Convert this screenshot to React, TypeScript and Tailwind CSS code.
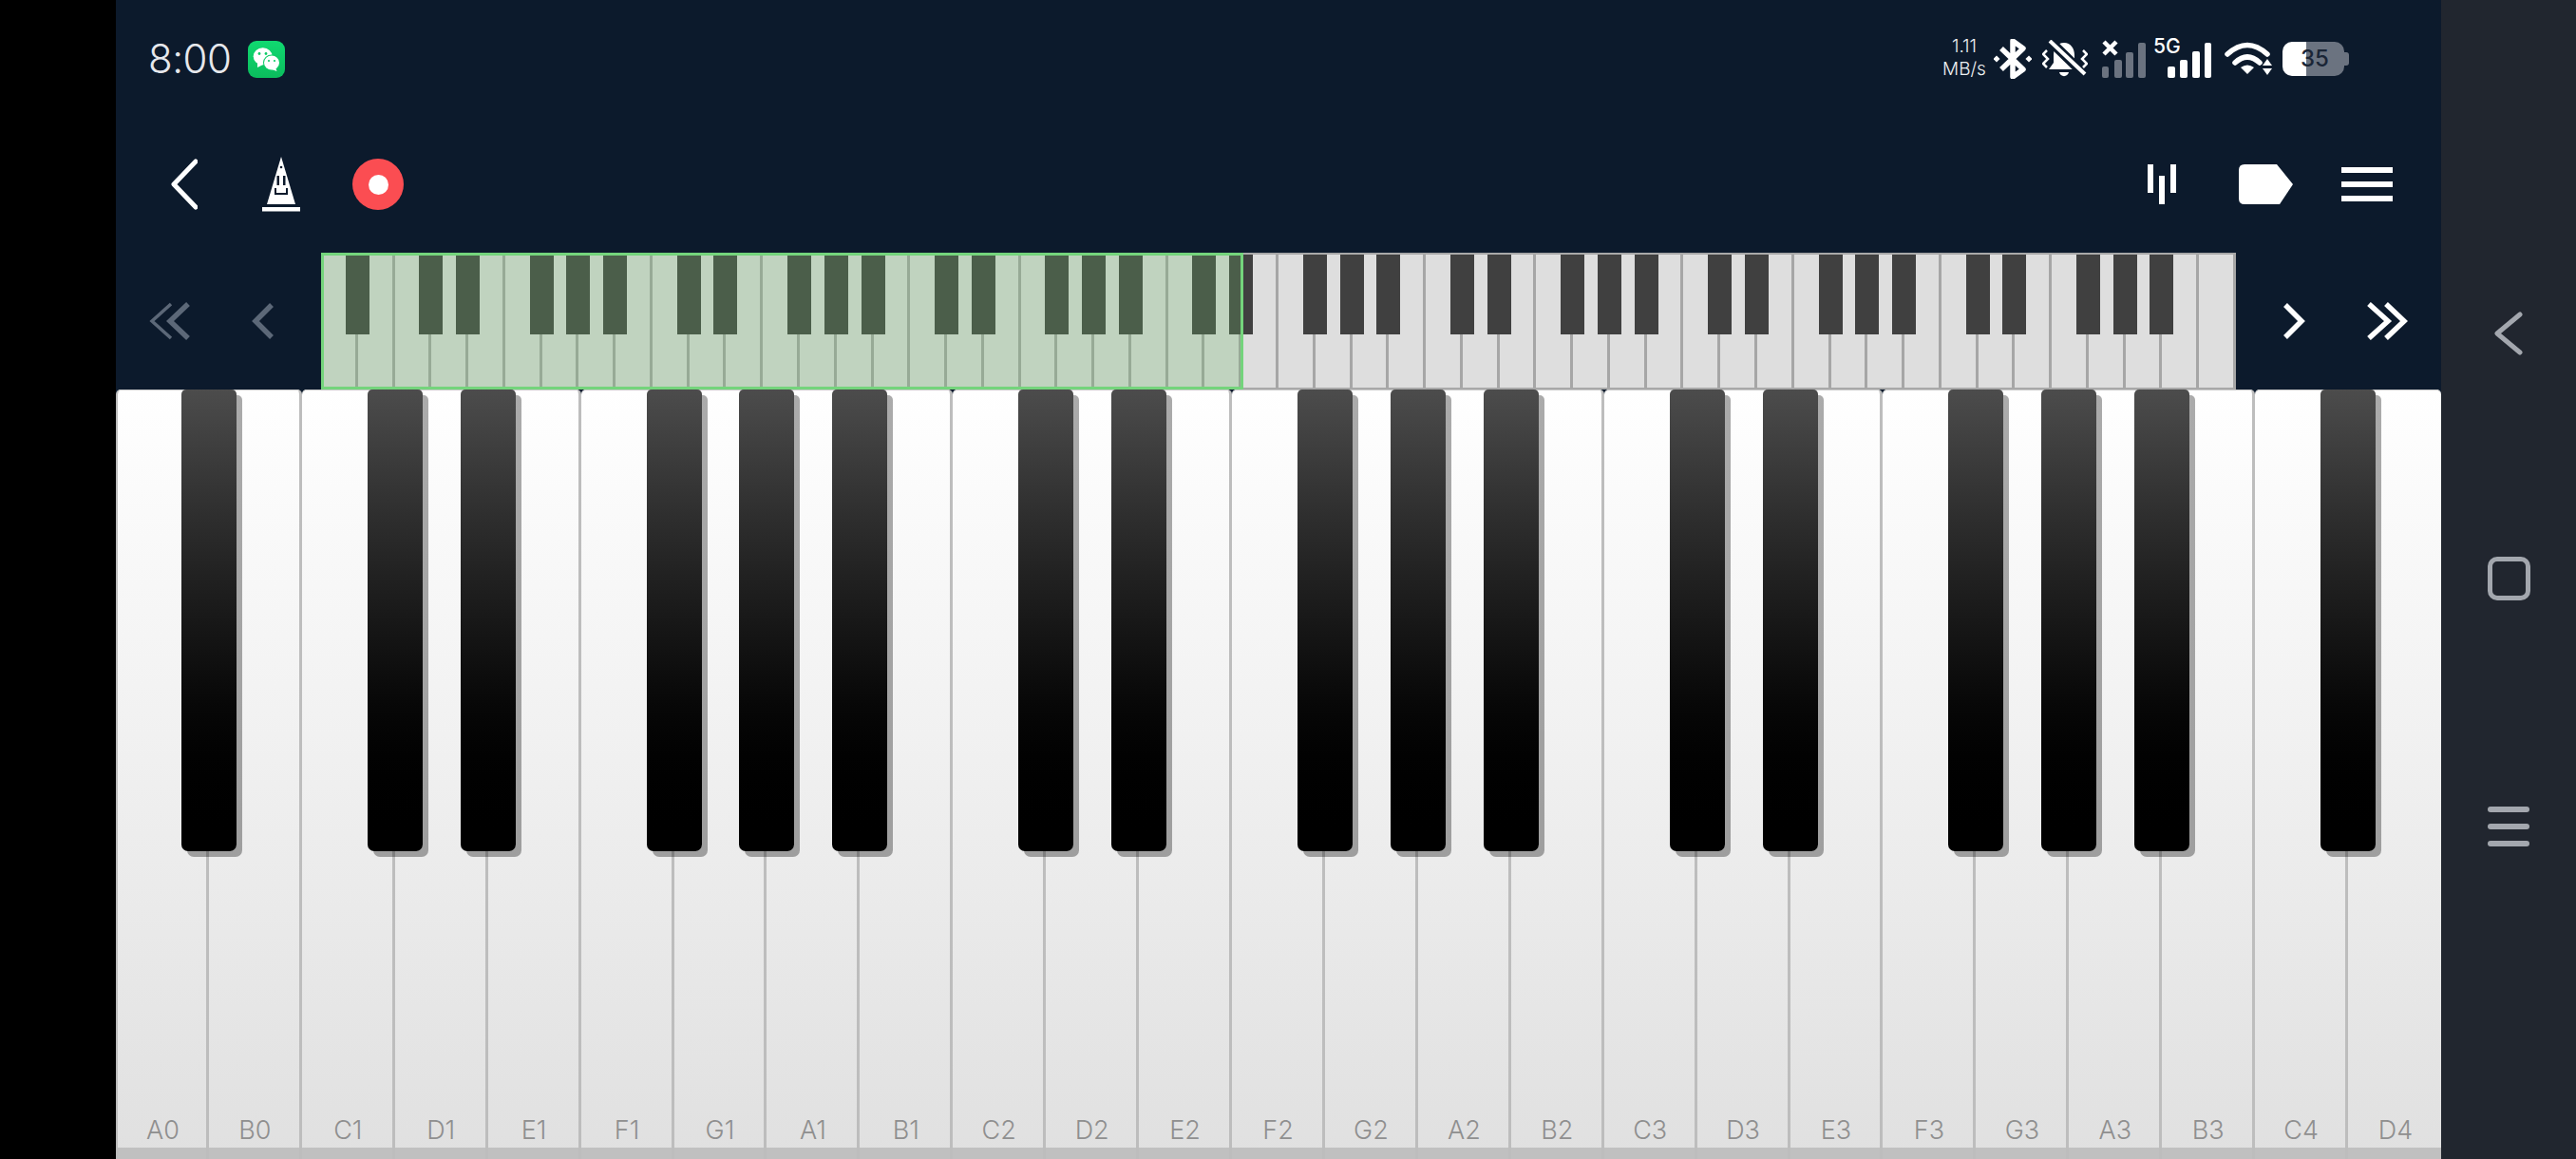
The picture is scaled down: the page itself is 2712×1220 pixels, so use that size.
import React from 'react';

const WHITE_LABELS = ['A0','B0','C1','D1','E1','F1','G1','A1','B1','C2','D2','E2','F2','G2','A2','B2','C3','D3','E3','F3','G3','A3','B3','C4','D4'];
const MINI_KEYS = Array.from({ length: 52 }, (_, i) => i);

// black key sits on the boundary after white key i (i is 0-based)
const hasBlack = (i: number, total: number) => i < total - 1 && [3, 4, 6, 0, 1].includes((i + 1) % 7);

const BG = '#0c1a2c';

function Chevron({ dir, color, double }: { dir: 'left' | 'right'; color: string; double?: boolean }) {
  const pts = dir === 'left' ? '22,3 5,20 22,37' : '3,3 20,20 3,37';
  if (double) {
    const first = dir === 'left' ? '24,2 4,20 24,38' : '3,2 23,20 3,38';
    const second = dir === 'left' ? '42,2 23,20 42,38' : '21,2 40,20 21,38';
    return (
      <svg width="44" height="40" viewBox="0 0 44 40" fill="none" stroke={color}>
        <polyline points={first} strokeWidth={dir === 'left' ? 3.5 : 5.5} />
        <polyline points={second} strokeWidth="5.5" />
      </svg>
    );
  }
  return (
    <svg width="24" height="40" viewBox="0 0 24 40" fill="none" stroke={color} strokeWidth="5.5">
      <polyline points={pts} />
    </svg>
  );
}

function StatusBar() {
  return (
    <div className="flex h-[124px] items-center pl-[34px] pr-[97px]">
      <span className="w-[86px] whitespace-nowrap text-[42px] font-light leading-none tracking-[-0.5px] text-[#e6e8ec] font-['Inter',sans-serif]">8:00</span>
      <div className="ml-[19px] flex h-[39px] w-[39px] items-center justify-center rounded-[9px] bg-linear-to-b from-[#10d970] to-[#0bbd5d]">
        <svg width="39" height="39" viewBox="0 0 39 39">
          <ellipse cx="15.7" cy="16.3" rx="10" ry="9" fill="#fff" />
          <path d="M10 23 L10 28 L16 25 Z" fill="#fff" />
          <ellipse cx="25" cy="23" rx="9" ry="8.5" fill="#0ecb66" />
          <ellipse cx="25" cy="23" rx="8" ry="7.5" fill="#fff" />
          <path d="M29 28 L30.5 32 L25 30 Z" fill="#fff" />
          <circle cx="12" cy="13.5" r="1.4" fill="#0ecb66" />
          <circle cx="19" cy="13.5" r="1.4" fill="#0ecb66" />
          <circle cx="22" cy="21" r="1.1" fill="#0ecb66" />
          <circle cx="28" cy="21" r="1.1" fill="#0ecb66" />
        </svg>
      </div>

      <div className="ml-auto flex items-center">
        <div className="-mt-[2px] flex w-[46px] flex-col items-center text-[19px] font-light leading-[24px] text-[#eef0f2] font-['Inter',sans-serif]">
          <span>1.11</span>
          <span className="whitespace-nowrap">MB/s</span>
        </div>
        {/* bluetooth */}
        <svg className="ml-[8px]" width="40" height="42" viewBox="0 0 40 42" fill="none" stroke="#fff" strokeWidth="5.5" strokeLinejoin="round">
          <polyline points="8,10 31,32 20,40 20,2 31,10 8,32" />
          <rect x="0.5" y="18.5" width="5" height="5" fill="#fff" stroke="none" transform="rotate(45 3 21)" />
          <rect x="34.5" y="18.5" width="5" height="5" fill="#fff" stroke="none" transform="rotate(45 37 21)" />
        </svg>
        {/* muted bell */}
        <svg className="ml-[11px]" width="48" height="40" viewBox="0 0 48 40" fill="none">
          <path d="M23 3 C30 3 34 9 34 16 L34 24 L39 31 L7 31 L12 24 L12 16 C12 9 16 3 23 3 Z" fill="#fff" />
          <path d="M18 34 H28 C27 39.5 19 39.5 18 34 Z" fill="#fff" />
          <line x1="6" y1="-1" x2="46" y2="38" stroke={BG} strokeWidth="10" />
          <line x1="8" y1="1" x2="45" y2="36" stroke="#fff" strokeWidth="4" />
          <path d="M5 11 L1 15 L6 20 L1 25 L5 29" stroke="#fff" strokeWidth="2.5" />
          <path d="M43 11 L47 15 L42 20 L47 25 L43 29" stroke="#fff" strokeWidth="2.5" />
        </svg>
        {/* sim 1, no service */}
        <svg className="ml-[15px]" width="46" height="40" viewBox="0 0 46 40" fill="#6b7380">
          <path d="M2 2 L15 15 M15 2 L2 15" stroke="#fff" strokeWidth="4.5" />
          <rect x="0" y="28" width="7" height="12" rx="2" />
          <rect x="13" y="21" width="8" height="19" rx="2" />
          <rect x="25" y="13" width="8" height="27" rx="2" />
          <rect x="38" y="3" width="8" height="37" rx="2" />
        </svg>
        {/* sim 2, 5G */}
        <div className="relative ml-[8px] h-[40px] w-[61px]">
          <span className="absolute left-0 top-[-5px] text-[21px] font-medium leading-[24px] text-white font-['Inter',sans-serif]">5G</span>
          <svg className="absolute inset-0" width="61" height="40" viewBox="0 0 61 40" fill="#fff">
            <rect x="15" y="28" width="8" height="12" rx="2" />
            <rect x="28" y="21" width="8" height="19" rx="2" />
            <rect x="41" y="12" width="8" height="28" rx="2" />
            <rect x="54" y="3" width="7" height="37" rx="2" />
          </svg>
        </div>
        {/* wifi */}
        <svg className="ml-[14px]" width="50" height="38" viewBox="0 0 50 38" fill="none" stroke="#fff">
          <path d="M3 14 Q24 -5 45 14" strokeWidth="5.5" strokeLinecap="round" />
          <path d="M11 23 Q24 11 37 23" strokeWidth="5.5" strokeLinecap="round" />
          <path d="M17 28 Q24 23 31 28 L24 35 Z" fill="#fff" stroke="none" />
          <path d="M45 19 L50 26 H40 Z" fill="#fff" stroke="none" />
          <path d="M40 29 H50 L45 36 Z" fill="#fff" stroke="none" />
        </svg>
        {/* battery */}
        <div className="relative ml-[11px] flex h-[36px] w-[70px] items-center">
          <div className="h-full w-[25px] rounded-l-[10px] bg-white" />
          <div className="h-full w-[40px] rounded-r-[10px] bg-[#6b7380]" />
          <div className="h-[14px] w-[5px] rounded-r-[3px] bg-[#6b7380]" />
          <span className="absolute left-[17px] w-[34px] text-center text-[24px] font-medium leading-none text-[#1a2536] font-['Inter',sans-serif]">35</span>
        </div>
      </div>
    </div>
  );
}

function Toolbar() {
  return (
    <div className="flex h-[142px] items-center pb-[2px] pl-[58px] pr-[51px]">
      <svg width="28" height="54" viewBox="0 0 28 54" fill="none" stroke="#fff" strokeWidth="5" strokeLinecap="round" strokeLinejoin="round">
        <polyline points="26,3 3,27 26,51" />
      </svg>
      <svg className="ml-[68px]" width="40" height="58" viewBox="0 0 40 58">
        <path d="M20 0 L35 50 H5 Z" fill="#fff" />
        <rect x="0" y="53" width="40" height="4.5" fill="#fff" />
        <circle cx="20" cy="11" r="1.3" fill={BG} />
        <rect x="15.5" y="20" width="2.5" height="10" fill={BG} />
        <rect x="22" y="20" width="2.5" height="10" fill={BG} />
        <path d="M14 33 V39 H26 V33" fill="none" stroke={BG} strokeWidth="2" />
      </svg>
      <div className="ml-[55px] flex h-[54px] w-[54px] items-center justify-center rounded-full bg-[#fb4d52]">
        <div className="h-[21px] w-[21px] rounded-full bg-white" />
      </div>

      <div className="ml-auto flex h-[42px] gap-[6px]">
        <div className="h-[30px] w-[6px] bg-white" />
        <div className="mt-[12px] h-[30px] w-[6px] bg-white" />
        <div className="h-[30px] w-[6px] bg-white" />
      </div>
      <svg className="ml-[66px]" width="57" height="42" viewBox="0 0 57 42" fill="#fff">
        <path d="M6 0 H40 L57 21 L43 42 H6 Q0 42 0 36 V6 Q0 0 6 0 Z" />
      </svg>
      <div className="ml-[51px] flex w-[54px] flex-col gap-[9px]">
        <div className="h-[6px] bg-white" />
        <div className="h-[6px] bg-white" />
        <div className="h-[6px] bg-white" />
      </div>
    </div>
  );
}

function MiniKeyboard() {
  return (
    <div className="flex h-[144px]">
      <div className="flex w-[216px] items-center gap-[64px] pl-[34px]">
        <Chevron dir="left" color="#5c6878" double />
        <Chevron dir="left" color="#5c6878" />
      </div>
      <div className="relative grid w-[2016px] grid-cols-[repeat(52,1fr)] border-y-2 border-[#a8a8a8]">
        {MINI_KEYS.map((i) => (
          <div key={i} className="relative border-r-[3px] border-[#a6a6a6] bg-[#dedede]">
            {hasBlack(i, MINI_KEYS.length) && (
              <div className="absolute right-[-15px] top-0 z-10 h-[84px] w-[25px] bg-[#404040]" />
            )}
          </div>
        ))}
        <div className="absolute left-0 top-[-2px] z-20 h-[144px] w-[971px] border-[3px] border-[#74d47c] bg-[rgba(110,180,104,0.26)]" />
      </div>
      <div className="flex w-[216px] items-center gap-[64px] pl-[49px]">
        <Chevron dir="right" color="#fff" />
        <Chevron dir="right" color="#fff" double />
      </div>
    </div>
  );
}

function Piano() {
  return (
    <div className="grid flex-1 grid-cols-[repeat(25,1fr)]">
      {WHITE_LABELS.map((label, i) => (
        <div
          key={label}
          className="relative flex flex-col justify-end rounded-t-[5px] border-r-[3px] border-[#bdbdbd] bg-linear-to-b from-white to-[#e0e0e0] shadow-[inset_0_1px_0_#c8c8c8] first:border-l-2 last:border-r-0"
        >
          <span className="pb-[2px] pl-[2px] text-center text-[27px] font-light leading-[32px] text-[#8f8f8f] font-['Inter',sans-serif]">{label}</span>
          <div className="h-[12px] bg-[#c0c0c0]" />
          {hasBlack(i, WHITE_LABELS.length) && (
            <div className="absolute right-[-32px] top-0 z-10 h-[486px] w-[58px] rounded-b-[7px] rounded-t-[5px] bg-linear-to-b from-[#4c4c4c] to-black shadow-[6px_6px_0_rgba(0,0,0,0.33)]" />
          )}
        </div>
      ))}
    </div>
  );
}

function NavRail() {
  return (
    <div className="flex w-[142px] flex-col items-center bg-[#21262f] pt-[328px]">
      <svg width="30" height="46" viewBox="0 0 30 46" fill="none" stroke="#a3a7ae" strokeWidth="5" strokeLinecap="round" strokeLinejoin="round">
        <polyline points="27,3 3,23 27,43" />
      </svg>
      <div className="mt-[212px] h-[46px] w-[45px] rounded-[10px] border-[5px] border-[#a3a7ae]" />
      <div className="mt-[217px] flex w-[44px] flex-col gap-[12px]">
        <div className="h-[6px] rounded-full bg-[#a3a7ae]" />
        <div className="h-[6px] rounded-full bg-[#a3a7ae]" />
        <div className="h-[6px] rounded-full bg-[#a3a7ae]" />
      </div>
    </div>
  );
}

export default function App() {
  return (
    <div className="flex h-[1220px] w-[2712px] overflow-hidden bg-black">
      <div className="w-[122px]" />
      <div className="flex w-[2448px] flex-col bg-[#0c1a2c]">
        <StatusBar />
        <Toolbar />
        <MiniKeyboard />
        <Piano />
      </div>
      <NavRail />
    </div>
  );
}
